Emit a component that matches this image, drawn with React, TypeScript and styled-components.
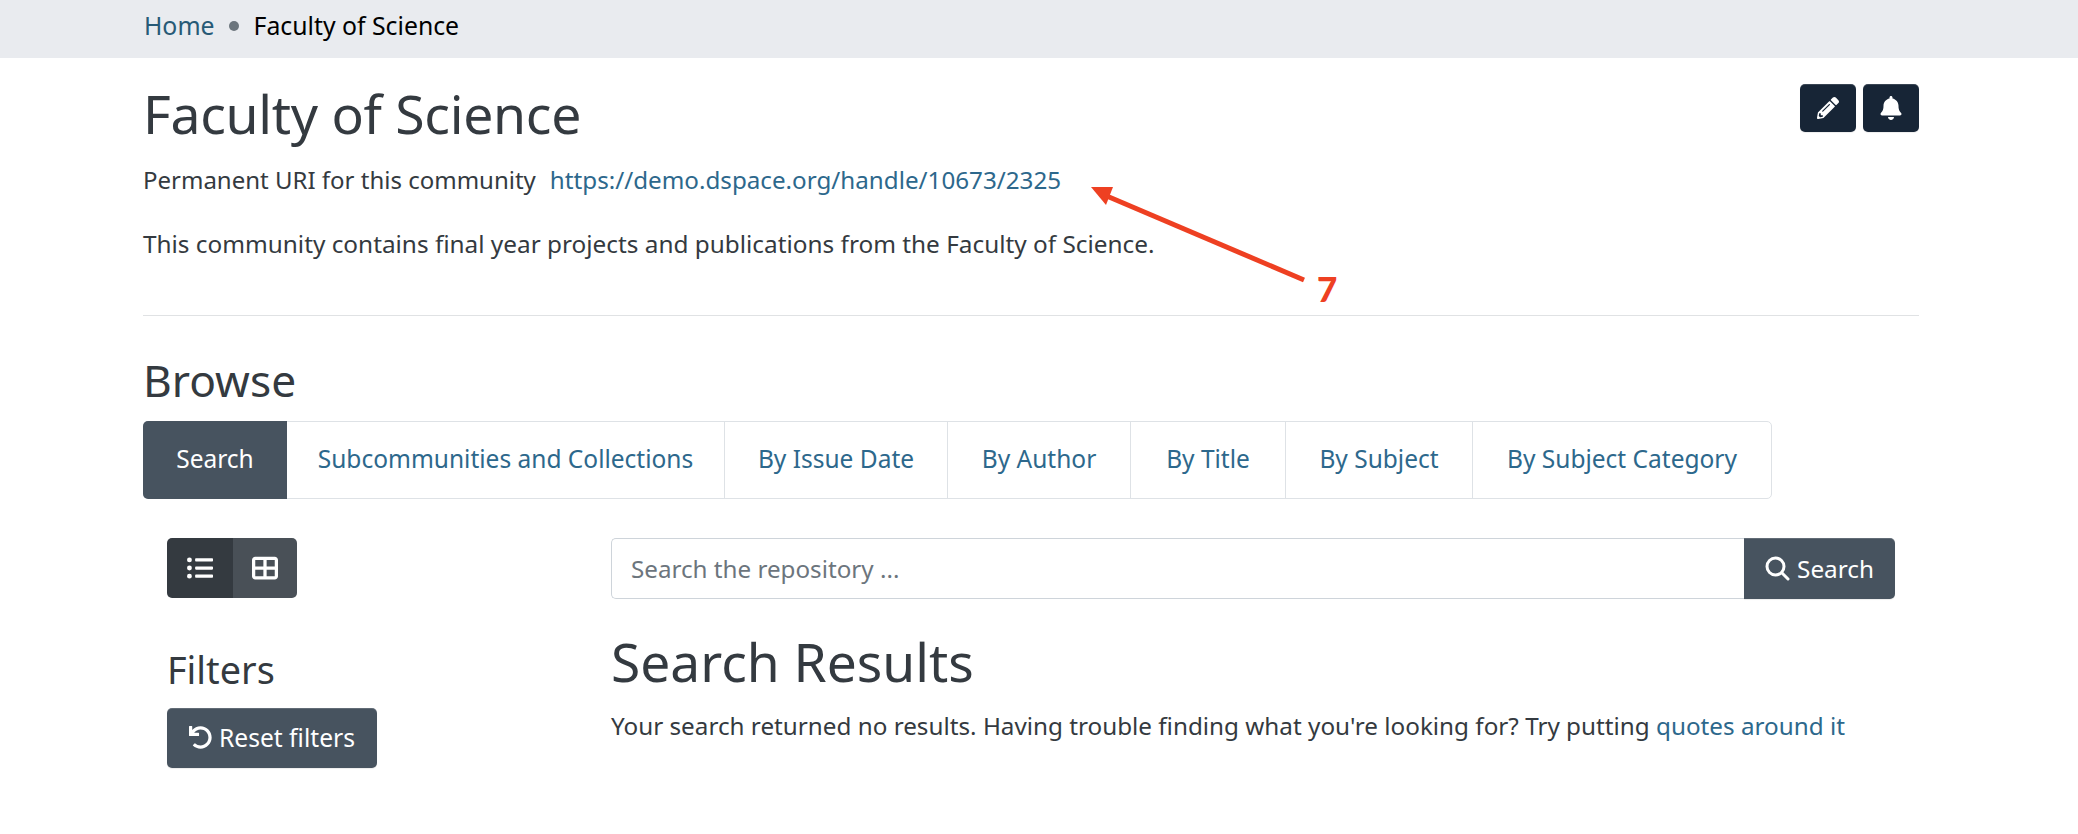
import React from 'react';
import styled, { createGlobalStyle } from 'styled-components';
import { FaPencilAlt, FaBell, FaListUl, FaUndo } from 'react-icons/fa';
import { FaTableCellsLarge } from 'react-icons/fa6';

const Global = createGlobalStyle`
  html, body { margin: 0; padding: 0; background: #fff; height: 834px; overflow: hidden; }
  body { font-family: "Noto Sans", "Open Sans", sans-serif; color: #343a40; font-size: 24px; }
  * { box-sizing: border-box; }
`;
const Page = styled.div`position: relative; width: 2078px; height: 834px; overflow: hidden;`;
const Crumbs = styled.nav`
  height: 58px; background: #e9ebef; padding-left: 144px; display: flex; align-items: center;
  font-size: 24.8px; padding-bottom: 8px;
`;
const Link = styled.a`color: #2d688c; text-decoration: none;`;
const HomeLink = styled(Link)`color: #275a76;`;
const Dot = styled.span`width: 10px; height: 10px; border-radius: 50%; background: #6c757d; margin: 2px 15px 0 14px;`;
const Current = styled.span`color: #000;`;
const Main = styled.main`width: 1776px; margin-left: 143px;`;
const Head = styled.header`display: flex; justify-content: space-between; align-items: flex-start; padding-top: 26px;`;
const Title = styled.h1`margin: -1px 0 0; font-size: 53.5px; font-weight: 400; line-height: 62px; letter-spacing: -0.3px;`;
const Actions = styled.div`display: flex; gap: 7px;`;
const IconButton = styled.button`
  width: 56px; height: 48px; border: 0; border-radius: 5px; background: #172536; color: #fff;
  display: flex; align-items: center; justify-content: center; padding: 0;
  box-shadow: inset 0 1px 0 rgba(255,255,255,.15), 0 1px 1px rgba(0,0,0,.075);
`;
const Uri = styled.p`margin: 19px 0 0; line-height: 32px; font-size: 24px; display: flex; gap: 14px;`;
const UriLink = styled(Link)`font-size: 24.2px;`;
const Desc = styled.p`margin: 32px 0 0; line-height: 32px; font-size: 24.35px;`;
const Rule = styled.hr`margin: 55px 0 0; border: 0; border-top: 1px solid #e0e2e4;`;
const H2 = styled.h2`margin: 39px 0 0; font-size: 44.3px; line-height: 50px; font-weight: 400;`;
const Tabs = styled.ul`
  list-style: none; margin: 16px 0 0; padding: 0; display: inline-flex; height: 78px;
  border: 1px solid #dee2e6; border-radius: 5px; vertical-align: top;
`;
const Tab = styled.li<{ $active?: boolean; $w: number }>`
  display: flex; align-items: center; justify-content: center; width: ${p => p.$w}px;
  font-size: 24.5px; margin: -1px 0; padding-bottom: 3px;
  color: ${p => (p.$active ? '#fff' : '#2d688c')};
  background: ${p => (p.$active ? '#47535f' : 'transparent')};
  border-right: ${p => (p.$active ? '0' : '1px solid #dee2e6')};
  border-radius: ${p => (p.$active ? '5px 0 0 5px' : '0')};
  margin-left: ${p => (p.$active ? '-1px' : '0')};
  &:last-child { border-right: 0; }
`;
const Columns = styled.section`display: grid; grid-template-columns: 444px 1284px; padding: 39px 24px 0;`;
const Side = styled.aside``;
const Toggle = styled.div`display: flex; width: 130px; height: 60px;`;
const ToggleBtn = styled.button<{ $on?: boolean }>`
  flex: ${p => (p.$on ? '66' : '64')}; border: 0; color: #fff; font-size: 26px; padding: 0;
  display: flex; align-items: center; justify-content: center;
  background: ${p => (p.$on ? '#343a40' : '#495057')};
  border-radius: ${p => (p.$on ? '5px 0 0 5px' : '0 5px 5px 0')};
`;
const H3 = styled.h3`margin: 50px 0 0; font-size: 37.8px; line-height: 44px; font-weight: 400;`;
const ResetBtn = styled.button`
  margin-top: 16px; width: 210px; height: 60px; background: #47535f; color: #fff; border: 0; border-radius: 5px;
  font: inherit; font-size: 24.6px; display: flex; align-items: center; justify-content: center; gap: 7px; padding: 0 0 2px;
  box-shadow: inset 0 1px 0 rgba(255,255,255,.15), 0 1px 1px rgba(0,0,0,.075);
`;
const Content = styled.div``;
const SearchRow = styled.form`display: flex; height: 61px;`;
const Input = styled.div`
  flex: 1; border: 1px solid #ced4da; border-right: 0; border-radius: 5px 0 0 5px;
  display: flex; align-items: center; padding-left: 19px; color: #6c757d; font-size: 24.2px;
`;
const SearchBtn = styled.button`
  width: 151px; background: #47535f; color: #fff; border: 0; border-radius: 0 5px 5px 0;
  font: inherit; font-size: 24.3px; display: flex; align-items: center; justify-content: center; gap: 7px; padding: 0;
  box-shadow: inset 0 1px 0 rgba(255,255,255,.15), 0 1px 1px rgba(0,0,0,.075);
`;
const H1b = styled.h2`margin: 32px 0 0; font-size: 53.3px; line-height: 62px; font-weight: 400;`;
const Result = styled.p`margin: 15px 0 0; font-size: 24.25px; line-height: 36px; white-space: nowrap;`;
const Note = styled.svg`position: absolute; left: 0; top: 0; pointer-events: none;`;
const Seven = styled.span`
  position: absolute; left: 1317px; top: 268px; color: #ee4022; font-family: "Lato", sans-serif;
  font-weight: 900; font-size: 35px; line-height: 40px;
`;

export default function App() {
  return (
    <Page>
      <Global />
      <Crumbs>
        <HomeLink>Home</HomeLink><Dot /><Current>Faculty of Science</Current>
      </Crumbs>
      <Main>
        <Head>
          <Title>Faculty of Science</Title>
          <Actions>
            <IconButton><FaPencilAlt size={22} /></IconButton>
            <IconButton><FaBell size={24} /></IconButton>
          </Actions>
        </Head>
        <Uri>Permanent URI for this community <UriLink>https://demo.dspace.org/handle/10673/2325</UriLink></Uri>
        <Desc>This community contains final year projects and publications from the Faculty of Science.</Desc>
        <Rule />
        <H2>Browse</H2>
        <Tabs>
          <Tab $active $w={144}>Search</Tab>
          <Tab $w={438}>Subcommunities and Collections</Tab>
          <Tab $w={223}>By Issue Date</Tab>
          <Tab $w={183}>By Author</Tab>
          <Tab $w={155}>By Title</Tab>
          <Tab $w={187}>By Subject</Tab>
          <Tab $w={298}>By Subject Category</Tab>
        </Tabs>
        <Columns>
          <Side>
            <Toggle>
              <ToggleBtn $on><FaListUl /></ToggleBtn>
              <ToggleBtn><FaTableCellsLarge /></ToggleBtn>
            </Toggle>
            <H3>Filters</H3>
            <ResetBtn><FaUndo size={23} />Reset filters</ResetBtn>
          </Side>
          <Content>
            <SearchRow>
              <Input>Search the repository ...</Input>
              <SearchBtn>
                <svg width="25" height="25" viewBox="0 0 25 25" fill="none" stroke="#fff" strokeWidth="3" strokeLinecap="round">
                  <circle cx="10.5" cy="10.5" r="8.5" />
                  <line x1="16.8" y1="16.8" x2="23" y2="23" />
                </svg>
                Search
              </SearchBtn>
            </SearchRow>
            <H1b>Search Results</H1b>
            <Result>Your search returned no results. Having trouble finding what you're looking for? Try putting <Link>quotes around it</Link></Result>
          </Content>
        </Columns>
      </Main>
      <Note width="2078" height="834" viewBox="0 0 2078 834">
        <line x1="1304" y1="280" x2="1102" y2="194" stroke="#ee4022" strokeWidth="5" />
        <polygon points="1091,187 1113,187 1106,205" fill="#ee4022" />
      </Note>
      <Seven>7</Seven>
    </Page>
  );
}
